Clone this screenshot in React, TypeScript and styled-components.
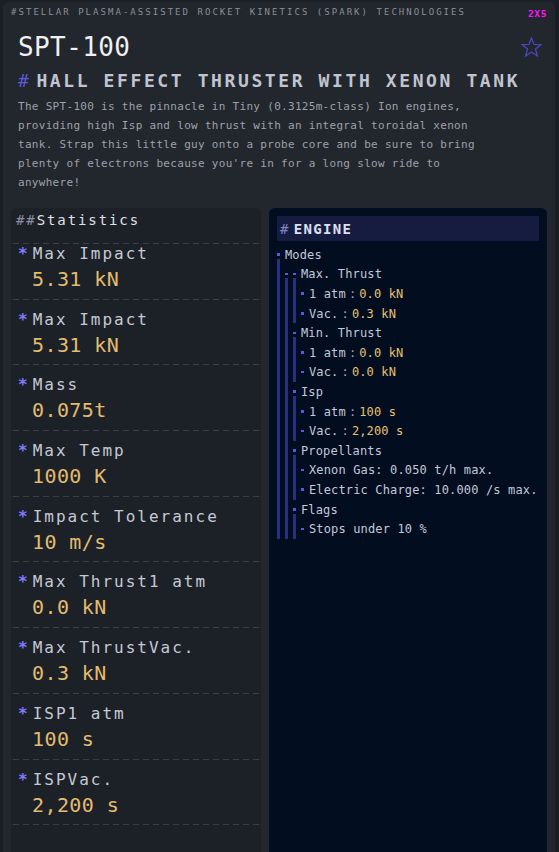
import React from 'react';
import styled, { createGlobalStyle, css } from 'styled-components';

const mono = `"DejaVu Sans Mono", "Liberation Mono", monospace`;

const GlobalStyle = createGlobalStyle`
  html, body { margin: 0; padding: 0; height: 100%; background: #1b1e24; overflow: hidden; }
  #root { height: 100%; }
`;

const dashed = css`
  background-image: repeating-linear-gradient(to right, #3a3f49 0 6px, transparent 6px 10px);
  background-repeat: no-repeat;
  background-position: left bottom;
  background-size: 100% 1px;
`;

const Panel = styled.div`
  box-sizing: border-box;
  margin: 2px 4px 0 3px;
  height: calc(100% - 2px);
  background: #22262d;
  border-radius: 6px 6px 0 0;
  padding: 3px 8px 0 8px;
  display: flex;
  flex-direction: column;
  font-family: ${mono};
`;

const TopBar = styled.div`
  display: flex;
  justify-content: space-between;
  align-items: center;
  height: 14px;
`;

const Maker = styled.span`
  font-size: 9px;
  letter-spacing: 2.04px;
  color: #8b8f97;
  line-height: 14px;
  white-space: nowrap;
`;

const SizeTag = styled.span`
  font-size: 9.5px;
  font-weight: bold;
  color: #ff14f4;
  letter-spacing: 0.6px;
  margin-top: 2px;
`;

const TitleRow = styled.div`
  display: flex;
  justify-content: space-between;
  align-items: center;
  margin-top: 12px;
  padding: 0 5px 0 7px;
  height: 32px;
`;

const Title = styled.h1`
  margin: 0;
  font-size: 26px;
  font-weight: normal;
  letter-spacing: 0.4px;
  color: #f0f0f0;
  line-height: 32px;
`;

const Subtitle = styled.h2`
  margin: 6px 0 0;
  padding-left: 7px;
  font-size: 18px;
  line-height: 24px;
  font-weight: bold;
  letter-spacing: 2.6px;
  color: #c0c4d0;
  white-space: nowrap;
`;

const Hash = styled.span<{ $color: string; $gap: number }>`
  color: ${(p) => p.$color};
  font-weight: normal;
  margin-right: ${(p) => p.$gap}px;
`;

const Description = styled.p`
  margin: 3.5px 0 0;
  padding-left: 7px;
  max-width: 480px;
  font-size: 11px;
  letter-spacing: 0.3px;
  line-height: 19px;
  color: #9da1ab;
`;

const Cards = styled.div`
  margin-top: 16.5px;
  flex: 1;
  min-height: 0;
  display: grid;
  grid-template-columns: 250px 1fr;
  column-gap: 8px;
`;

const StatsCard = styled.section`
  background: #1c2027;
  border-radius: 6px 6px 0 0;
  padding: 2px 1px 0 2px;
`;

const StatsHeader = styled.div`
  ${dashed};
  font-size: 14px;
  letter-spacing: 1.9px;
  line-height: 20px;
  padding: 0 0 14px 3px;
  color: #e0e2ea;
`;

const StatList = styled.div`
  display: flex;
  flex-direction: column;
`;

const StatItem = styled.div`
  ${dashed};
  padding: 0 0 7.7px 5px;
  & + & {
    padding-top: 10px;
  }
`;

const StatLabel = styled.div`
  display: flex;
  align-items: center;
  font-size: 16px;
  letter-spacing: 2px;
  line-height: 20px;
  color: #c5c9d3;
  white-space: nowrap;
`;

const Star = styled.span`
  color: #7b7bff;
  font-weight: bold;
  letter-spacing: 0;
  margin-right: 5px;
`;

const StatValue = styled.div`
  margin-top: 2px;
  padding-left: 14px;
  font-size: 20px;
  line-height: 26px;
  letter-spacing: 0.4px;
  color: #e2bb6e;
`;

const EngineCard = styled.section`
  background: #020d20;
  border-radius: 6px 6px 0 0;
  padding: 8px;
`;

const EngineHeader = styled.div`
  height: 25px;
  background: #161c40;
  display: flex;
  align-items: center;
  padding-left: 3px;
  font-size: 14px;
  font-weight: bold;
  letter-spacing: 1.3px;
  color: #dde0f0;
`;

const Tree = styled.div`
  margin-top: 4px;
  font-size: 12px;
  letter-spacing: 0.15px;
  color: #c8cce0;
`;

const NodeGrid = styled.div<{ $w: number }>`
  display: grid;
  grid-template-columns: ${(p) => p.$w}px 1fr;
  column-gap: ${(p) => 8 - p.$w}px;
`;

const Rail = styled.div`
  display: flex;
  flex-direction: column;
  padding-top: 8.3px;
`;

const Dot = styled.div<{ $w: number }>`
  height: ${(p) => p.$w}px;
  background: #575be0;
`;

const Bar = styled.div`
  flex: 1;
  margin-top: 3px;
  background: #2b2f80;
`;

const Content = styled.div`
  min-width: 0;
`;

const Row = styled.div`
  height: 19.6px;
  display: flex;
  align-items: center;
  gap: 3px;
  white-space: nowrap;
`;

const Key = styled.span`
  color: #c4c8da;
`;

const Sep = styled.span`
  color: #9ea2c0;
`;

const Val = styled.span`
  color: #e8c170;
`;

type TreeNode = { label?: string; k?: string; v?: string; children?: TreeNode[] };

const tree: TreeNode = {
  label: 'Modes',
  children: [
    {
      children: [
        {
          label: 'Max. Thrust',
          children: [
            { k: '1 atm', v: '0.0 kN' },
            { k: 'Vac.', v: '0.3 kN' },
          ],
        },
        {
          label: 'Min. Thrust',
          children: [
            { k: '1 atm', v: '0.0 kN' },
            { k: 'Vac.', v: '0.0 kN' },
          ],
        },
        {
          label: 'Isp',
          children: [
            { k: '1 atm', v: '100 s' },
            { k: 'Vac.', v: '2,200 s' },
          ],
        },
        {
          label: 'Propellants',
          children: [
            { label: 'Xenon Gas: 0.050 t/h max.' },
            { label: 'Electric Charge: 10.000 /s max.' },
          ],
        },
        {
          label: 'Flags',
          children: [{ label: 'Stops under 10 %' }],
        },
      ],
    },
  ],
};

const Node: React.FC<{ node: TreeNode; level: number }> = ({ node, level }) => {
  const w = level === 0 ? 3 : 2.5;
  const hasKids = !!node.children && node.children.length > 0;
  return (
    <NodeGrid $w={w}>
      <Rail>
        <Dot $w={w} />
        {hasKids && <Bar />}
      </Rail>
      <Content>
        {node.label && (
          <Row>
            <Key>{node.label}</Key>
          </Row>
        )}
        {node.k && (
          <Row>
            <Key>{node.k}</Key>
            <Sep>:</Sep>
            <Val>{node.v}</Val>
          </Row>
        )}
        {node.children?.map((c, i) => (
          <Node key={i} node={c} level={level + 1} />
        ))}
      </Content>
    </NodeGrid>
  );
};

const stats: [string, string][] = [
  ['Max Impact', '5.31 kN'],
  ['Max Impact', '5.31 kN'],
  ['Mass', '0.075t'],
  ['Max Temp', '1000 K'],
  ['Impact Tolerance', '10 m/s'],
  ['Max Thrust1 atm', '0.0 kN'],
  ['Max ThrustVac.', '0.3 kN'],
  ['ISP1 atm', '100 s'],
  ['ISPVac.', '2,200 s'],
];

const FavStar = () => (
  <svg width="21" height="20" viewBox="0 0 21 20">
    <polygon
      points="10.5,1 13,7.4 20,7.6 14.5,12 16.4,19 10.5,15 4.6,19 6.5,12 1,7.6 8,7.4"
      fill="none"
      stroke="#4848b8"
      strokeWidth="1.3"
      strokeLinejoin="miter"
    />
  </svg>
);

export default function App() {
  return (
    <>
      <GlobalStyle />
      <Panel>
        <TopBar>
          <Maker>#STELLAR PLASMA-ASSISTED ROCKET KINETICS (SPARK) TECHNOLOGIES</Maker>
          <SizeTag>2X5</SizeTag>
        </TopBar>
        <TitleRow>
          <Title>SPT-100</Title>
          <FavStar />
        </TitleRow>
        <Subtitle>
          <Hash $color="#5b5bd6" $gap={5}>#</Hash>HALL EFFECT THRUSTER WITH XENON TANK
        </Subtitle>
        <Description>
          The SPT-100 is the pinnacle in Tiny (0.3125m-class) Ion engines, providing high Isp and
          low thrust with an integral toroidal xenon tank. Strap this little guy onto a probe core
          and be sure to bring plenty of electrons because you're in for a long slow ride to
          anywhere!
        </Description>
        <Cards>
          <StatsCard>
            <StatsHeader>
              <Hash $color="#8890a0" $gap={0}>##</Hash>Statistics
            </StatsHeader>
            <StatList>
              {stats.map(([label, value], i) => (
                <StatItem key={i}>
                  <StatLabel>
                    <Star>*</Star>
                    {label}
                  </StatLabel>
                  <StatValue>{value}</StatValue>
                </StatItem>
              ))}
            </StatList>
          </StatsCard>
          <EngineCard>
            <EngineHeader>
              <Hash $color="#7d84c4" $gap={4}>#</Hash>ENGINE
            </EngineHeader>
            <Tree>
              <Node node={tree} level={0} />
            </Tree>
          </EngineCard>
        </Cards>
      </Panel>
    </>
  );
}
